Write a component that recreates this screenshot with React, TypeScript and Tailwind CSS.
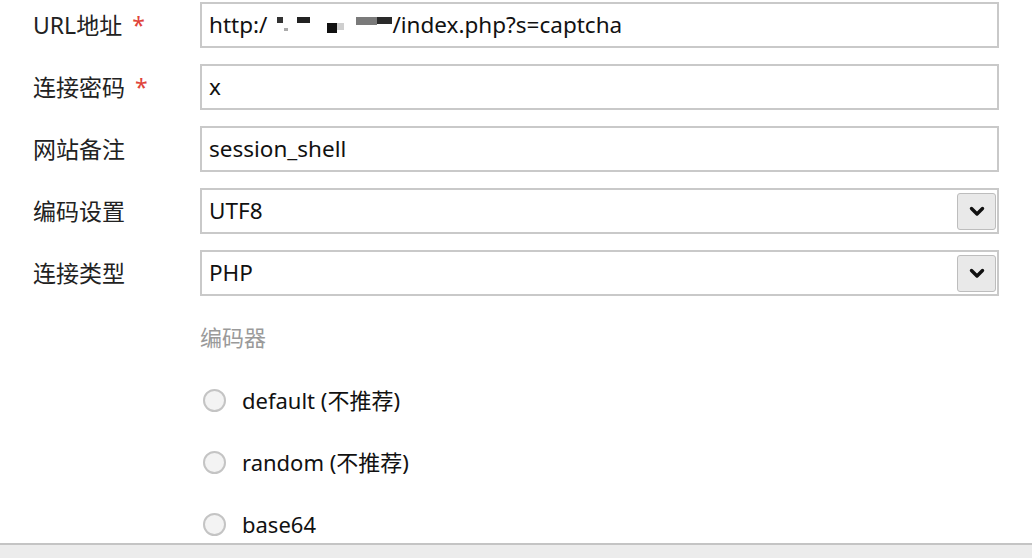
import React from 'react';

const labelCls = "w-[200px] shrink-0 pl-[33px] text-[23px] leading-[30px] text-[#222]";
const boxCls = "flex-1 h-[46px] border-2 border-[#c9c9c9] bg-white flex items-center pl-[7px] text-[22.5px] leading-[30px] text-[#111]";

function Row({ label, required, children }: { label: string; required?: boolean; children: React.ReactNode }) {
  return (
    <div className="flex items-center h-[46px] mb-[16px]">
      <div className={labelCls}>
        {label}
        {required && <span className="text-[#e0443a] ml-[10px]">*</span>}
      </div>
      {children}
    </div>
  );
}

function Chevron() {
  return (
    <div className="w-[39px] h-[37px] mr-[1px] rounded-[3px] border border-[#bdbdbd] bg-[#e9e9e9] flex items-center justify-center">
      <svg width="16" height="11" viewBox="0 0 16 11">
        <path d="M2.5 2.5 L8 8 L13.5 2.5" fill="none" stroke="#111" strokeWidth="3.4" strokeLinecap="round" strokeLinejoin="round" />
      </svg>
    </div>
  );
}

function Radio({ label }: { label: string }) {
  return (
    <div className="flex items-center h-[40px] mb-[22px]">
      <div className="w-[23px] h-[23px] rounded-full border-2 border-[#c4c4c4] bg-[#f3f3f3] ml-[3px]" />
      <span className="ml-[16px] text-[22px] leading-[30px] text-[#111]">{label}</span>
    </div>
  );
}

export default function App() {
  return (
    <div className="w-[1032px] h-[558px] bg-white overflow-hidden flex flex-col" style={{ fontFamily: '"Noto Sans", "Noto Sans CJK SC", sans-serif' }}>
      <div className="h-[543px] shrink-0 overflow-hidden pt-[2px] pr-[33px]">
        <Row label="URL地址" required>
          <div className={boxCls}>
            <span>http:/</span>
            {/* redacted host */}
            <span className="flex items-start h-[20px] w-[125px] pt-[2px]">
              <span className="w-[6px] h-[6px] bg-[#333] ml-[10px]" />
              <span className="w-[4px] h-[3px] bg-[#aaa] mt-[11px] ml-[1px]" />
              <span className="w-[14px] h-[6px] bg-[#222] ml-[9px]" />
              <span className="w-[10px] h-[10px] bg-[#111] ml-[17px] mt-[6px]" />
              <span className="w-[7px] h-[7px] bg-[#cfcfcf] mt-[6px]" />
              <span className="w-[22px] h-[8px] bg-[#7a7a7a] ml-[12px]" />
              <span className="w-[16px] h-[7px] bg-[#2a2a2a]" />
            </span>
            <span>/index.php?s=captcha</span>
          </div>
        </Row>
        <Row label="连接密码" required>
          <div className={boxCls}>x</div>
        </Row>
        <Row label="网站备注">
          <div className={boxCls}>session_shell</div>
        </Row>
        <Row label="编码设置">
          <div className={boxCls + " justify-between"}>
            <span>UTF8</span>
            <Chevron />
          </div>
        </Row>
        <Row label="连接类型">
          <div className={boxCls + " justify-between"}>
            <span>PHP</span>
            <Chevron />
          </div>
        </Row>
        <div className="pl-[200px]">
          <div className="text-[22px] leading-[30px] text-[#9a9a9a] mt-[26px] mb-[28px]">编码器</div>
          <Radio label="default (不推荐)" />
          <Radio label="random (不推荐)" />
          <Radio label="base64" />
        </div>
      </div>
      <div className="flex-1 border-t-2 border-[#c4c4c4] bg-[#ececec]" />
    </div>
  );
}
